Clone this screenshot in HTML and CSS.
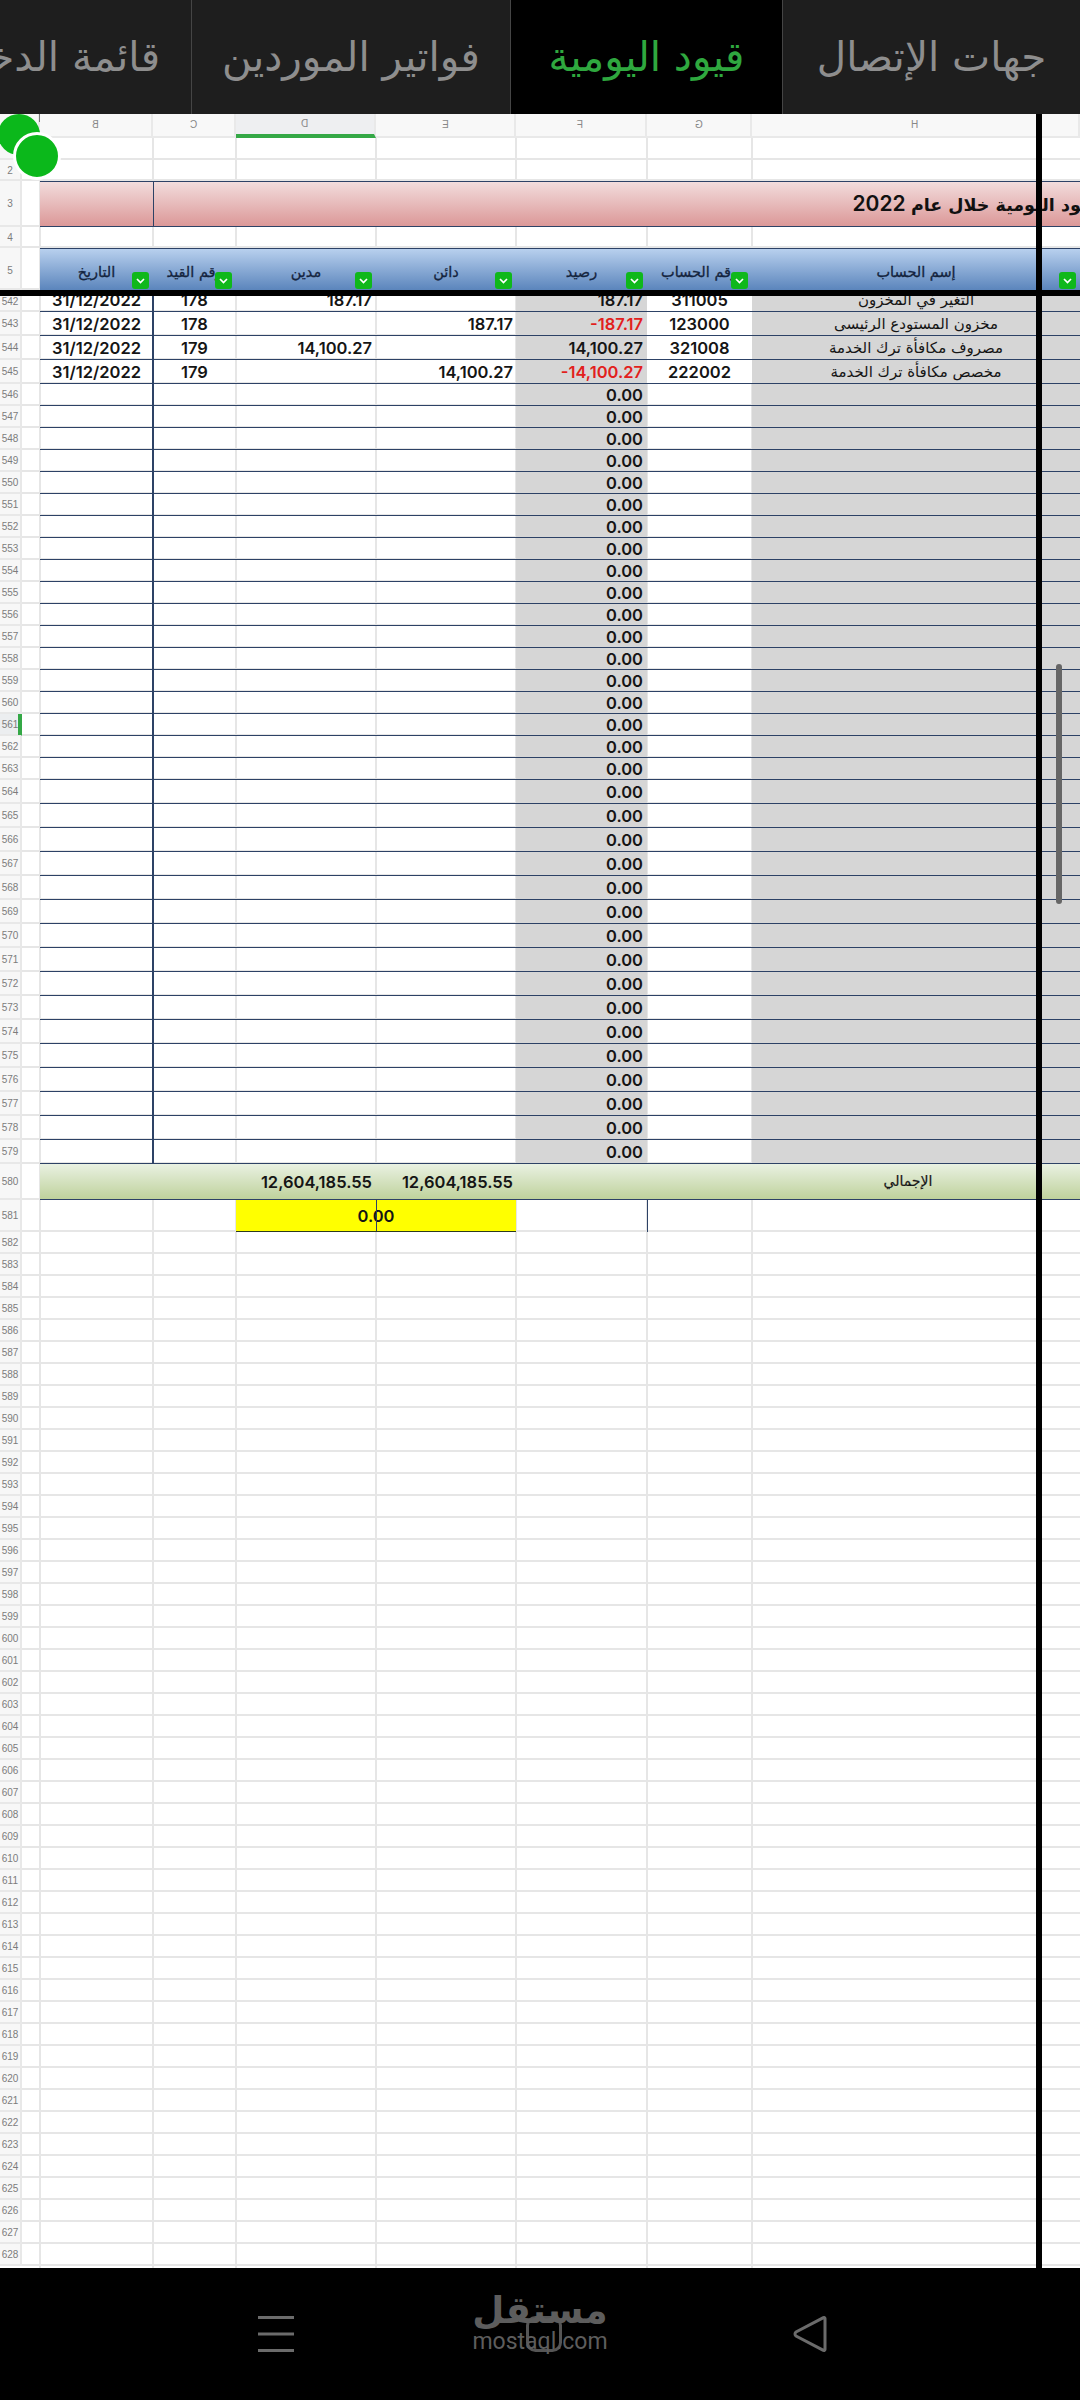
FILE: index.html
```html
<!DOCTYPE html>
<html lang="ar">
<head>
<meta charset="utf-8">
<title>قيود اليومية</title>
<link rel="stylesheet" href="styles.css">
</head>
<body>
<div class="screen">
<nav class="tabs">
<div class="tab">جهات الإتصال</div>
<div class="tab active">قيود اليومية</div>
<div class="tab">فواتير الموردين</div>
<div class="tab last">قائمة الدخل</div>
</nav>
<main class="sheet">
<div class="colhead">
<span class="ch"></span><span class="ch corner"></span>
<span class="ch"><em>B</em></span><span class="ch"><em>C</em></span><span class="ch sel"><em>D</em></span><span class="ch"><em>E</em></span><span class="ch"><em>F</em></span><span class="ch"><em>G</em></span><span class="ch"><em>H</em></span>
</div>
<div class="row"><i class="rh">1</i></div>
<div class="row r2"><i class="rh">2</i></div>
<div class="row r3"><i class="rh">3</i><div class="band red"><span class="bandb"></span><span class="title"><span class="tar">القيود اليومية خلال عام</span> 2022</span></div></div>
<div class="row r4"><i class="rh">4</i></div>
<div class="row r5"><i class="rh">5</i>
<div class="band blue">
<span class="hc wb">التاريخ<svg class="flt" viewBox="0 0 17 17"><rect width="17" height="17" rx="3"/><path d="M5 7l3.5 3.5L12 7"/></svg></span>
<span class="hc wc">رقم القيد<svg class="flt" viewBox="0 0 17 17"><rect width="17" height="17" rx="3"/><path d="M5 7l3.5 3.5L12 7"/></svg></span>
<span class="hc wd">مدين<svg class="flt" viewBox="0 0 17 17"><rect width="17" height="17" rx="3"/><path d="M5 7l3.5 3.5L12 7"/></svg></span>
<span class="hc wd">دائن<svg class="flt" viewBox="0 0 17 17"><rect width="17" height="17" rx="3"/><path d="M5 7l3.5 3.5L12 7"/></svg></span>
<span class="hc wf">رصيد<svg class="flt" viewBox="0 0 17 17"><rect width="17" height="17" rx="3"/><path d="M5 7l3.5 3.5L12 7"/></svg></span>
<span class="hc wg">رقم الحساب<svg class="flt" viewBox="0 0 17 17"><rect width="17" height="17" rx="3"/><path d="M5 7l3.5 3.5L12 7"/></svg></span>
<span class="hc wh">إسم الحساب<svg class="flt" viewBox="0 0 17 17"><rect width="17" height="17" rx="3"/><path d="M5 7l3.5 3.5L12 7"/></svg></span>
</div></div>
<div class="freeze"></div>
<div class="row d cut"><i class="rh">542</i><span class="b">31/12/2022</span><span class="c">178</span><span class="dc">187.17</span><span class="f">187.17</span><span class="g">311005</span><span class="h">التغير في المخزون</span></div>
<div class="row d t"><i class="rh">543</i><span class="b">31/12/2022</span><span class="c">178</span><span class="ec">187.17</span><span class="f neg">-187.17</span><span class="g">123000</span><span class="h">مخزون المستودع الرئيسى</span></div>
<div class="row d t"><i class="rh">544</i><span class="b">31/12/2022</span><span class="c">179</span><span class="dc">14,100.27</span><span class="f">14,100.27</span><span class="g">321008</span><span class="h">مصروف مكافأة ترك الخدمة</span></div>
<div class="row d t"><i class="rh">545</i><span class="b">31/12/2022</span><span class="c">179</span><span class="ec">14,100.27</span><span class="f neg">-14,100.27</span><span class="g">222002</span><span class="h">مخصص مكافأة ترك الخدمة</span></div>
<div class="row d"><i class="rh">546</i><span class="f">0.00</span><span class="h"></span></div>
<div class="row d"><i class="rh">547</i><span class="f">0.00</span><span class="h"></span></div>
<div class="row d"><i class="rh">548</i><span class="f">0.00</span><span class="h"></span></div>
<div class="row d"><i class="rh">549</i><span class="f">0.00</span><span class="h"></span></div>
<div class="row d"><i class="rh">550</i><span class="f">0.00</span><span class="h"></span></div>
<div class="row d"><i class="rh">551</i><span class="f">0.00</span><span class="h"></span></div>
<div class="row d"><i class="rh">552</i><span class="f">0.00</span><span class="h"></span></div>
<div class="row d"><i class="rh">553</i><span class="f">0.00</span><span class="h"></span></div>
<div class="row d"><i class="rh">554</i><span class="f">0.00</span><span class="h"></span></div>
<div class="row d"><i class="rh">555</i><span class="f">0.00</span><span class="h"></span></div>
<div class="row d"><i class="rh">556</i><span class="f">0.00</span><span class="h"></span></div>
<div class="row d"><i class="rh">557</i><span class="f">0.00</span><span class="h"></span></div>
<div class="row d"><i class="rh">558</i><span class="f">0.00</span><span class="h"></span></div>
<div class="row d"><i class="rh">559</i><span class="f">0.00</span><span class="h"></span></div>
<div class="row d"><i class="rh">560</i><span class="f">0.00</span><span class="h"></span></div>
<div class="row d"><i class="rh cur">561</i><span class="f">0.00</span><span class="h"></span></div>
<div class="row d"><i class="rh">562</i><span class="f">0.00</span><span class="h"></span></div>
<div class="row d"><i class="rh">563</i><span class="f">0.00</span><span class="h"></span></div>
<div class="row d t"><i class="rh">564</i><span class="f">0.00</span><span class="h"></span></div>
<div class="row d t"><i class="rh">565</i><span class="f">0.00</span><span class="h"></span></div>
<div class="row d t"><i class="rh">566</i><span class="f">0.00</span><span class="h"></span></div>
<div class="row d t"><i class="rh">567</i><span class="f">0.00</span><span class="h"></span></div>
<div class="row d t"><i class="rh">568</i><span class="f">0.00</span><span class="h"></span></div>
<div class="row d t"><i class="rh">569</i><span class="f">0.00</span><span class="h"></span></div>
<div class="row d t"><i class="rh">570</i><span class="f">0.00</span><span class="h"></span></div>
<div class="row d t"><i class="rh">571</i><span class="f">0.00</span><span class="h"></span></div>
<div class="row d t"><i class="rh">572</i><span class="f">0.00</span><span class="h"></span></div>
<div class="row d t"><i class="rh">573</i><span class="f">0.00</span><span class="h"></span></div>
<div class="row d t"><i class="rh">574</i><span class="f">0.00</span><span class="h"></span></div>
<div class="row d t"><i class="rh">575</i><span class="f">0.00</span><span class="h"></span></div>
<div class="row d t"><i class="rh">576</i><span class="f">0.00</span><span class="h"></span></div>
<div class="row d t"><i class="rh">577</i><span class="f">0.00</span><span class="h"></span></div>
<div class="row d t"><i class="rh">578</i><span class="f">0.00</span><span class="h"></span></div>
<div class="row d t"><i class="rh">579</i><span class="f">0.00</span><span class="h"></span></div>
<div class="row r580"><i class="rh">580</i><div class="band green"><span class="dc">12,604,185.55</span><span class="ec">12,604,185.55</span><span class="h">الإجمالي</span></div></div>
<div class="row r581"><i class="rh">581</i><span class="yellow">0.00</span><span class="gline"></span></div>
<div class="row"><i class="rh">582</i></div>
<div class="row"><i class="rh">583</i></div>
<div class="row"><i class="rh">584</i></div>
<div class="row"><i class="rh">585</i></div>
<div class="row"><i class="rh">586</i></div>
<div class="row"><i class="rh">587</i></div>
<div class="row"><i class="rh">588</i></div>
<div class="row"><i class="rh">589</i></div>
<div class="row"><i class="rh">590</i></div>
<div class="row"><i class="rh">591</i></div>
<div class="row"><i class="rh">592</i></div>
<div class="row"><i class="rh">593</i></div>
<div class="row"><i class="rh">594</i></div>
<div class="row"><i class="rh">595</i></div>
<div class="row"><i class="rh">596</i></div>
<div class="row"><i class="rh">597</i></div>
<div class="row"><i class="rh">598</i></div>
<div class="row"><i class="rh">599</i></div>
<div class="row"><i class="rh">600</i></div>
<div class="row"><i class="rh">601</i></div>
<div class="row"><i class="rh">602</i></div>
<div class="row"><i class="rh">603</i></div>
<div class="row"><i class="rh">604</i></div>
<div class="row"><i class="rh">605</i></div>
<div class="row"><i class="rh">606</i></div>
<div class="row"><i class="rh">607</i></div>
<div class="row"><i class="rh">608</i></div>
<div class="row"><i class="rh">609</i></div>
<div class="row"><i class="rh">610</i></div>
<div class="row"><i class="rh">611</i></div>
<div class="row"><i class="rh">612</i></div>
<div class="row"><i class="rh">613</i></div>
<div class="row"><i class="rh">614</i></div>
<div class="row"><i class="rh">615</i></div>
<div class="row"><i class="rh">616</i></div>
<div class="row"><i class="rh">617</i></div>
<div class="row"><i class="rh">618</i></div>
<div class="row"><i class="rh">619</i></div>
<div class="row"><i class="rh">620</i></div>
<div class="row"><i class="rh">621</i></div>
<div class="row"><i class="rh">622</i></div>
<div class="row"><i class="rh">623</i></div>
<div class="row"><i class="rh">624</i></div>
<div class="row"><i class="rh">625</i></div>
<div class="row"><i class="rh">626</i></div>
<div class="row"><i class="rh">627</i></div>
<div class="row"><i class="rh">628</i></div>
<div class="row"></div>
<span class="dot one"></span><span class="dot two"></span>
<span class="vbar"></span>
<span class="scroll"></span>
</main>
<footer class="navbar">
<svg class="ico" viewBox="0 0 36 36"><path d="M0 1.5h36M0 18h36M0 34.5h36"/></svg>
<svg class="ico home" viewBox="0 0 36 36"><rect x="1.5" y="1.5" width="33" height="33" rx="8"/></svg>
<svg class="ico back" viewBox="0 0 36 36"><path d="M32 2.5v31a1 1 0 0 1-1.6.8L3 20a2.5 2.5 0 0 1 0-4L30.400 1.700a1 1 0 0 1 1.600.8z"/></svg>
<div class="mark"><span class="mar">مستقل</span><span class="men">mostaql.com</span></div>
</footer>
</div>
</body>
</html>
```
FILE: styles.css
```css
*{box-sizing:border-box;margin:0;padding:0}
html,body{width:1080px;height:2400px;overflow:hidden;background:#000}
.screen{width:1080px;height:2400px;display:flex;flex-direction:column;font-family:"DejaVu Sans",sans-serif}
.tabs{height:114px;flex:none;display:flex;direction:rtl;background:#1e1e1e;overflow:hidden}
.tab{flex:none;width:298px;height:114px;line-height:114px;text-align:center;font-size:40.500px;color:#8e8e8e;border-left:1px solid #454545;white-space:nowrap}
.tab.active{width:272px;background:#000;color:#2fa83f;border-left:1px solid #454545}
.tab:nth-child(3){width:319px}
.tab.last{width:300px;text-align:right;padding-right:31px;border-left:0}
.sheet{position:relative;height:2154px;flex:none;overflow:hidden;background:#fff}
.colhead{height:24px;display:grid;grid-template-columns:22px 18px 113px 83px 140px 140px 131px 105px 1fr;background:#f8f8f8}
.ch{display:flex;align-items:center;justify-content:center;border-right:2px solid #e9e9e9;border-bottom:2px solid #e9e9e9;padding-right:0;position:relative}
.ch em{font:normal 10px/1 "Liberation Sans",sans-serif;color:#888;display:block;transform:scaleX(-1)}
.ch.sel{background:#eeeff1;border-bottom:4px solid #34a846}
.corner::after{content:"";position:absolute;right:-2px;top:0;width:1.500px;height:8px;background:#777}
.row{position:relative;display:grid;grid-template-columns:22px 18px 113px 83px 140px 140px 131px 105px 1fr;grid-template-rows:22px;height:22px;line-height:22px;font:600 16.500px/22px Inter,"Liberation Sans",sans-serif;color:#151515;
background-color:#fff;
background-image:linear-gradient(#e6e6e6,#e6e6e6),linear-gradient(#e6e6e6,#e6e6e6),linear-gradient(#e6e6e6,#e6e6e6),linear-gradient(#e6e6e6,#e6e6e6),linear-gradient(#e6e6e6,#e6e6e6),linear-gradient(#e6e6e6,#e6e6e6),linear-gradient(#e6e6e6,#e6e6e6),linear-gradient(#e6e6e6,#e6e6e6);
background-repeat:no-repeat;
background-size:2px 100%,2px 100%,2px 100%,2px 100%,2px 100%,2px 100%,2px 100%,100% 2px;
background-position:39px 0,152px 0,235px 0,375px 0,515px 0,646px 0,751px 0,0 100%}
.r2{height:21px;grid-template-rows:21px}
.r3{height:46px;grid-template-rows:46px}
.r4{height:21px;grid-template-rows:21px}
.r5{height:42px;grid-template-rows:42px}
.t{height:24px;grid-template-rows:24px;line-height:24px}
.rh{grid-column:1;grid-row:1;font:normal 10px/22px "Liberation Sans",sans-serif;text-align:center;color:#7c7c7c;background:#f7f7f7;border-right:2px solid #e8e8e8;border-bottom:2px solid #e8e8e8;position:relative}
.t .rh{line-height:24px}
.r3 .rh{line-height:46px}
.r5 .rh{line-height:46px}
.r580 .rh{line-height:36px}
.r581 .rh{line-height:32px}
.cur{background:#eceef0;border-right-color:#34a846}
.cur::after{content:"";position:absolute;right:-2px;top:0;bottom:-1px;width:4px;background:#34a846}
.d::before{content:"";position:absolute;left:152px;top:0;bottom:0;width:1.500px;background:#2d4266;z-index:1}
.d::after{content:"";position:absolute;left:40px;right:0;bottom:0;height:1.500px;background:#2d4266;z-index:1}
.b,.c,.dc,.ec,.f,.g,.h{grid-row:1;white-space:nowrap}
.b{grid-column:3;text-align:center}
.c{grid-column:4;text-align:center}
.dc{grid-column:5;text-align:right;padding-right:4px}
.ec{grid-column:6;text-align:right;padding-right:3px}
.f{grid-column:7;text-align:right;padding-right:4px;background:#d6d6d6}
.g{grid-column:8;text-align:center;background:#fff}
.h{grid-column:9;text-align:center;background:#d6d6d6;font:normal 15px/22px "DejaVu Sans",sans-serif;direction:rtl}
.t .h{line-height:24px}
.neg{color:#e2201c}
.cut{height:16px;grid-template-rows:16px;line-height:24px;overflow:hidden}
.cut span{margin-top:-8px;height:24px;line-height:24px}
.cut .rh{line-height:11px}
.band{grid-column:3/10;grid-row:1;display:grid;grid-template-columns:113px 83px 140px 140px 131px 105px 1fr;position:relative}
.red{background:linear-gradient(#f2dcdc,#dc9898);border-top:1.500px solid #2d4266;border-bottom:1.500px solid #2d4266;overflow:hidden;display:flex}
.bandb{width:113.500px;flex:none;border-right:1.500px solid #2d4266}
.title{flex:none;margin-left:699px;direction:rtl;font:600 21px/43px Inter,"DejaVu Sans",sans-serif;color:#111;white-space:nowrap}
.tar{font:bold 17.500px/43px "DejaVu Sans",sans-serif}
.blue{background:linear-gradient(#b8d0ee,#5b85bc);border-top:1.500px solid #2d4266}
.hc{position:relative;height:40.500px;text-align:center;font:normal 14.500px/46px "DejaVu Sans",sans-serif;color:#14243e;-webkit-text-stroke:.3px #14243e;direction:rtl;white-space:nowrap}
.wb{grid-column:1}.wc{grid-column:2}.wf{grid-column:5}.wg{grid-column:6}.wh{grid-column:7}
.flt{position:absolute;right:4px;bottom:1px;width:17px;height:17px;display:block}
[dir] .flt,.hc .flt{left:auto}
.flt rect{fill:#0fb81b}
.flt path{fill:none;stroke:#fff;stroke-width:1.700}
.freeze{height:6px;background:#000;position:relative;z-index:2}
.r580{height:36px;grid-template-rows:36px;line-height:36px}
.green{background:linear-gradient(#e9f1e2,#bfd29c);border-bottom:1.500px solid #2d4266}
.green .dc{grid-column:3}
.green .ec{grid-column:4}
.green .h{grid-column:7;background:none;line-height:34px;font-size:14px;padding-right:16px;-webkit-text-stroke:.2px #222}
.r581{height:32px;grid-template-rows:32px}
.yellow{grid-column:5/7;grid-row:1;background:#ff0;text-align:center;line-height:32px;border-bottom:1.500px solid #2c3a1e;position:relative}
.yellow::after{content:"";position:absolute;left:139.500px;top:0;bottom:0;width:1.500px;background:#2d4266}
.gline{grid-column:8;grid-row:1;border-left:1.500px solid #2d4266;margin-bottom:-1px}
.dot{position:absolute;border-radius:50%;background:#0bb81b;z-index:3}
.one{left:-2px;top:0;width:42px;height:41px}
.two{left:13px;top:18px;width:48px;height:48px;border:3px solid #fff}
.vbar{position:absolute;left:1036px;top:0;bottom:0;width:6px;background:#000;z-index:4}
.scroll{position:absolute;left:1056px;top:550px;width:6px;height:240px;border-radius:3px;background:#666;z-index:3}
.navbar{position:relative;flex:1;display:flex;justify-content:center;gap:231.500px;padding:48px 0 0 7px;background:#000}
.ico{width:36px;height:36px;flex:none;fill:none;stroke:#6b6b6b;stroke-width:3}
.home{stroke:#555}
.back{width:36px}
.mark{position:absolute;left:474px;top:21px;width:132px;display:flex;flex-direction:column;align-items:center;color:#5d5d5d}
.mar{font:bold 37px/43px "DejaVu Sans",sans-serif;direction:rtl;white-space:nowrap}
.men{font:normal 23px/20px Roboto,sans-serif;white-space:nowrap}
```
